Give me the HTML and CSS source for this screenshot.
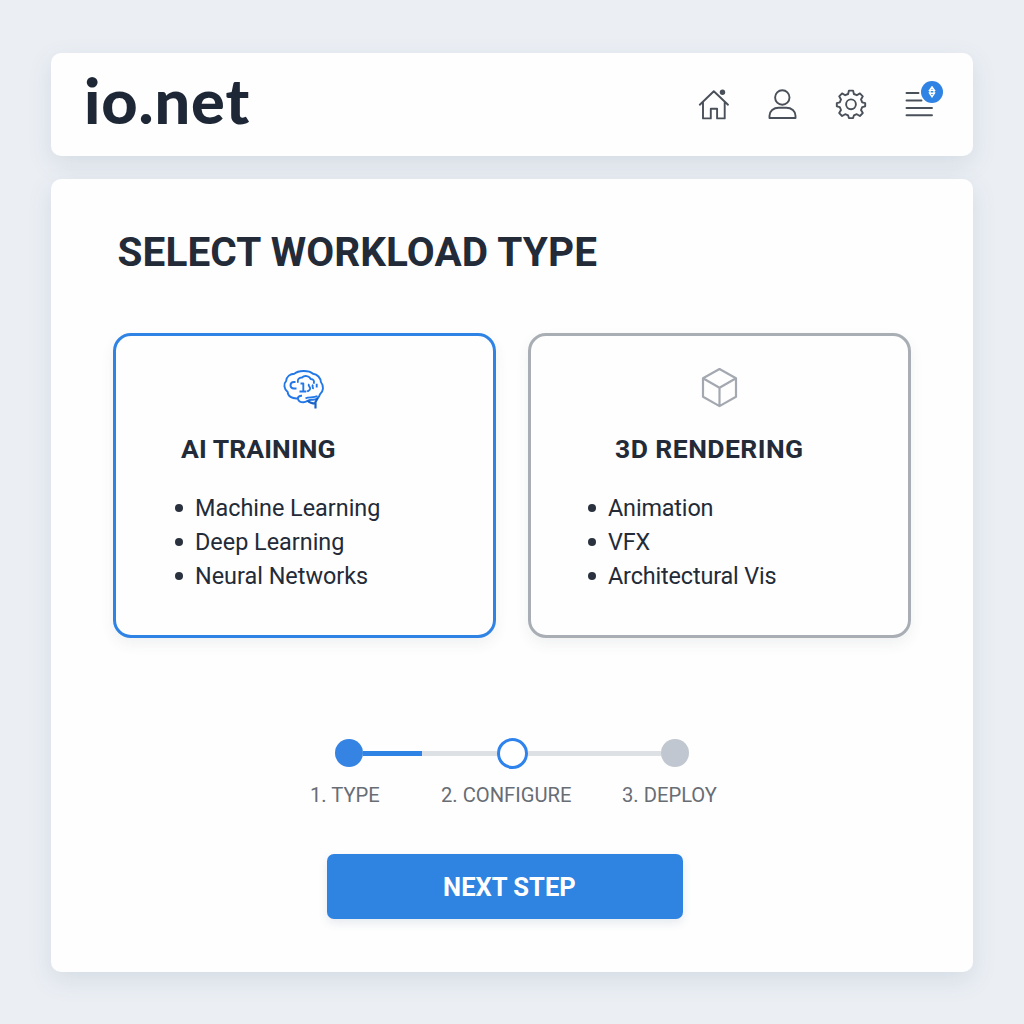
FILE: index.html
```html
<!DOCTYPE html>
<html lang="en">
<head>
<meta charset="utf-8">
<title>io.net – Select workload type</title>
<link rel="stylesheet" href="styles.css">
</head>
<body>
<header class="topbar">
  <div class="logo">io.net</div>
  <nav class="nav">
    <svg class="nav-icon" width="36" height="36" viewBox="0 0 36 36"><path d="M3.8 18.7 17.8 5.2 32 18.7M7 16.2v16.2h7.8V22.8h6.3v9.6h7.6V16.2"/><circle class="dot" cx="26.5" cy="6.3" r="2.7"/></svg>
    <svg class="nav-icon" width="36" height="36" viewBox="0 0 36 36"><circle cx="18.3" cy="11.5" r="7.2"/><path d="M5.5 32v-2.2c0-4.7 4-8 9.2-8h7.600c5.200 0 9.200 3.300 9.200 8V32z"/></svg>
    <svg class="nav-icon" width="36" height="36" viewBox="0 0 36 36"><circle cx="18" cy="18.3" r="4.9"/><path d="M15.900 4.600h4.200l.8 3.400 2.900 1.200 3.100-1.800 2.900 2.900-1.800 3.100 1.200 2.900 3 .8v3.200l-3 .8-1.200 2.900 1.800 3.100-2.900 2.900-3.100-1.800-2.900 1.200-.8 2.700h-4.200l-.8-2.700-2.900-1.200L9.100 30l-2.900-2.900L8 24l-1.200-2.900-3-.8v-3.200l3-.8L8 13.400l-1.800-3.100 2.900-2.900 3.100 1.800L15.100 8z"/></svg>
    <div class="menu">
      <svg class="nav-icon" width="36" height="36" viewBox="0 0 36 36"><path d="M5.500 7h12M5.500 14.500h15M5.500 22h25.500M5.500 29.200h25.500"/></svg>
      <span class="badge"><svg width="8" height="12" viewBox="0 0 8 12"><path d="M4 .8 1.600 4.200h4.800zM1.600 7.200 4 10.800l2.400-3.600zM2 4.200v3M6 4.200v3"/></svg></span>
    </div>
  </nav>
</header>
<main class="panel">
  <h1 class="title">SELECT WORKLOAD TYPE</h1>
  <div class="cards">
    <section class="card selected">
      <svg class="card-icon" width="44" height="44" viewBox="0 0 44 44"><path d="M12.500 7.700C16 4.200 27 4 31 7.700c4.500.5 7.500 4.200 7.900 8.300 3.300 4 2.500 9.700-.9 12.300-1 3.600-4 5.700-8 5.400-3.500-.2-5 2.500-8.600 2.600-3.300 0-5-1.600-5.600-3.900C10 32.800 5.500 30.200 5.700 25.900 1.800 22.900 1.400 17.700 4.200 14.800c.3-4.300 4-7.100 8.300-7.100z"/><path d="M15.800 32.500c.3-2.200 2.200-2.900 4.200-2.800M23.500 32.300c4-1.400 8-.3 12-2.300"/><path class="stem" d="M25.500 34.500c2.500 2.800 5 3.100 8 3.100M33.500 42.500V36l2.300-4"/><path d="M13.500 16H12c-2.500 0-3.500 1.500-3.500 3.300s1.200 3.200 3.500 3.200h2.500M16 16.700c-1.200-3.400 1.200-5.200 4-5.200 2.300-2.300 7.500-2 8.600 1.500 3.200 0 3.900 2.200 3.100 4.700M18.500 17.500h2.800v7.800M17.500 25.500h6.700M27 18c-1.800 2.300 2.500 3 .9 5.600-.8 1.300-2 1.200-2.700 2.200M31.200 18.700c-2 1.500.3 2.200-.3 4.200M34.700 17.700v3.800"/></svg>
      <h2 class="card-title">AI TRAINING</h2>
      <ul class="list"><li>Machine Learning</li><li>Deep Learning</li><li>Neural Networks</li></ul>
    </section>
    <section class="card rendering">
      <svg class="card-icon" width="44" height="44" viewBox="0 0 44 44"><path d="M22.500 3 39 12.300v18.500L22.500 40.100 6 30.800V12.300zM6 12.300l16.500 9.500L39 12.300M22.500 21.800v18.300"/></svg>
      <h2 class="card-title">3D RENDERING</h2>
      <ul class="list"><li>Animation</li><li>VFX</li><li>Architectural Vis</li></ul>
    </section>
  </div>
  <div class="stepper">
    <span class="node done"></span><span class="line first"></span><span class="node current"></span><span class="line"></span><span class="node"></span>
  </div>
  <div class="labels"><span>1. TYPE</span><span>2. CONFIGURE</span><span>3. DEPLOY</span></div>
  <button class="next">NEXT STEP</button>
</main>
</body>
</html>
```
FILE: styles.css
```css
* { box-sizing: border-box; }
body {
  margin: 0;
  height: 1024px;
  padding: 53px 51px 52px;
  display: flex;
  flex-direction: column;
  gap: 23px;
  background: #ebeff4;
  font-family: Roboto, "Liberation Sans", sans-serif;
  color: #232b38;
}
.topbar, .panel {
  background: #fefefe;
  border-radius: 10px;
  box-shadow: 0 8px 24px rgba(70, 90, 125, .13);
}
.topbar {
  height: 103px;
  flex: none;
  padding: 0 36px 0 33px;
  display: flex;
  justify-content: space-between;
}
.logo {
  font: 900 63px/94px Lato, sans-serif;
  letter-spacing: .9px;
  color: #1d2735;
}
.nav {
  display: flex;
  gap: 32.5px;
  padding-top: 33px;
}
.nav-icon {
  display: block;
  fill: none;
  stroke: #4a5059;
  stroke-width: 1.9;
  stroke-linejoin: round;
  stroke-linecap: round;
}
.nav-icon .dot { fill: #4a5059; stroke: none; }
.menu { position: relative; }
.badge {
  position: absolute;
  left: 20px;
  top: -5px;
  width: 22px;
  height: 22px;
  border-radius: 50%;
  background: #2f83e4;
  display: flex;
  align-items: center;
  justify-content: center;
}
.badge svg { fill: none; stroke: #fff; stroke-width: 1.4; }
.panel {
  height: 793px;
  flex: none;
  padding: 49px 62px 0;
  display: flex;
  flex-direction: column;
}
.title {
  margin: 0 0 57px;
  padding-left: 4.5px;
  font-size: 40.5px;
  line-height: 48px;
  font-weight: 700;
  letter-spacing: .1px;
}
.cards { display: flex; gap: 32px; }
.card {
  width: 383px;
  height: 305px;
  border: 3px solid #a9aeb4;
  border-radius: 18px;
  padding: 30px 0 0 56px;
  box-shadow: 0 6px 14px rgba(60, 70, 90, .07);
}
.card.selected { border-color: #2f83e4; }
.card-icon {
  display: block;
  margin-left: 110px;
  fill: none;
  stroke: #a4a9b1;
  stroke-width: 2.2;
  stroke-linejoin: round;
}
.selected .card-icon { stroke: #2378e8; stroke-width: 1.9; }
.selected .card-icon .stem { stroke: #1764c8; stroke-width: 2.2; }
.card-title {
  margin: 23px 0 26px 9px;
  font-size: 26.5px;
  line-height: 32px;
  font-weight: 700;
  letter-spacing: .1px;
}
.rendering .card-title { margin-left: 28px; letter-spacing: .45px; }
.list {
  margin: 0;
  padding: 0;
  list-style: none;
  font-size: 23.4px;
  line-height: 34px;
}
.list li { display: flex; align-items: center; gap: 12px; }
.list li::before {
  content: "";
  width: 8px;
  height: 8px;
  margin-left: 3px;
  border-radius: 50%;
  background: #29323e;
}
.rendering .list { margin-left: -2px; letter-spacing: -.15px; }
.stepper {
  display: flex;
  align-items: center;
  width: 354px;
  height: 32px;
  margin: 99px 0 0 222px;
}
.node {
  width: 28px;
  height: 28px;
  flex: none;
  border-radius: 50%;
  background: #c1c7d0;
}
.node.done { background: #3584e4; }
.node.current {
  width: 31px;
  height: 31px;
  border: 3px solid #2f83ed;
  background: #fff;
}
.line { height: 5px; flex: 1; background: #dde0e4; }
.line.first { background: linear-gradient(to right, #2f83e4 59px, #dde0e4 59px); }
.labels {
  display: flex;
  margin: 14px 0 0 197px;
  font-size: 20.2px;
  line-height: 24px;
  color: #686d74;
}
.labels span:nth-child(1) { width: 131px; }
.labels span:nth-child(2) { width: 181px; }
.next {
  margin: 47px 0 0 214px;
  width: 356px;
  height: 65px;
  border: 0;
  border-radius: 7px;
  background: #2f83e1;
  color: #fff;
  font: 700 25.6px/65px Roboto, sans-serif;
  padding: 1px 0 0 9px;
  box-shadow: 0 4px 10px rgba(50, 80, 120, .12);
}
```
